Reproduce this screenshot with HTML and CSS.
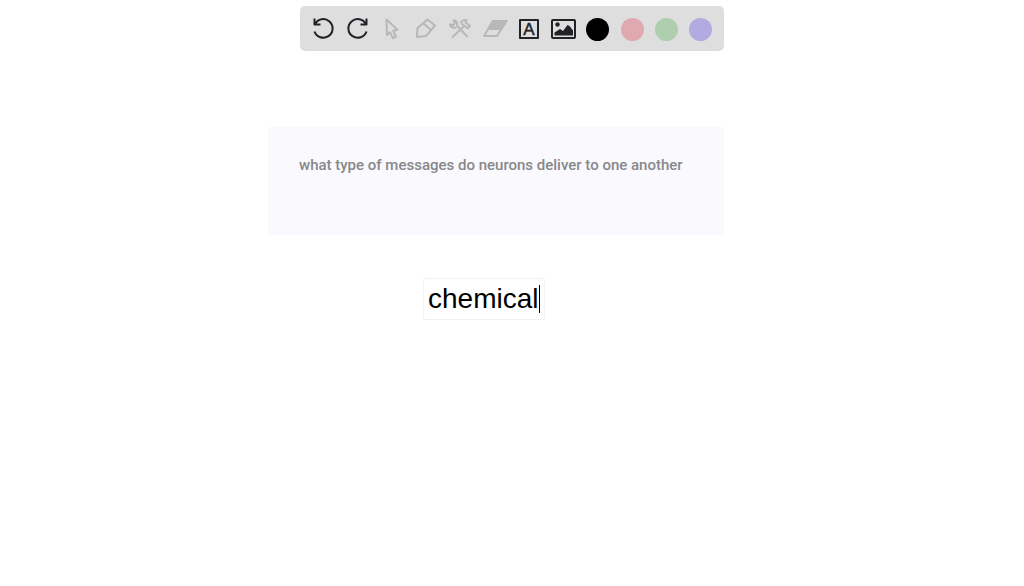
FILE: index.html
```html
<!DOCTYPE html>
<html lang="en">
<head>
  <meta charset="UTF-8" />
  <meta name="viewport" content="width=device-width, initial-scale=1.0"/>
  <title>Whiteboard</title>
  <link rel="stylesheet" href="styles.css">
</head>
<body>
  <main class="board">
    <div class="toolbar" role="toolbar" aria-label="Drawing tools">
      <button type="button" class="tool" aria-label="Undo">
        <svg viewBox="0 0 24 24"><path d="M3.5 1.5v6h6M4 7.2A9.3 9.3 0 1 1 3.5 14.5"/></svg>
      </button>
      <button type="button" class="tool" aria-label="Redo">
        <svg viewBox="0 0 24 24"><path d="M21.5 1.5v6h-6M21 7.2A9.3 9.3 0 1 0 21.5 14.5"/></svg>
      </button>
      <button type="button" class="tool faded" aria-label="Select">
        <svg viewBox="0 0 24 24"><path d="M6.5 2.5L7 18l3-2.8 3 6 3-1.600-2.800-5.800L17.500 12.800z"/></svg>
      </button>
      <button type="button" class="tool faded" aria-label="Pen">
        <svg viewBox="0 0 24 24"><path d="M13.500 2.500L21 8.500 12 19 3 20l.5-9zM9.500 6.500l7.500 6.500"/></svg>
      </button>
      <button type="button" class="tool faded" aria-label="Tools">
        <svg viewBox="0 0 24 24">
          <path d="M5 3c3 0 5 2.500 4 5.500L19.500 20M2 7c0 3 3.500 5 6.500 3M5 3l2 3-2 2.500L2 7"/>
          <path d="M4 20.500L15.500 9.500M12.500 6c1.500-2.500 4-3.500 6-2.500l-1 2 4.500 3.500-2.500 2.500L13.500 6.500"/>
        </svg>
      </button>
      <button type="button" class="tool faded" aria-label="Eraser">
        <svg viewBox="0 0 24 24"><path d="M10 4h13.500L14 19H1z"/><path class="solid" d="M10 4h13.500l-5 8H5z"/></svg>
      </button>
      <button type="button" class="tool" aria-label="Text">
        <svg viewBox="0 0 24 24"><rect x="3" y="3" width="18" height="18"/><text x="12" y="18">A</text></svg>
      </button>
      <button type="button" class="tool" aria-label="Image">
        <svg viewBox="0 0 24 24">
          <rect x="1" y="3" width="23" height="18" rx="1"/>
          <circle class="fill" cx="6.5" cy="7.5" r="2.2"/>
          <path class="fill" d="M3.500 18.500v-3L9 12l3 2 4.500-6 2 1 3.500 4.500v5z"/>
        </svg>
      </button>
      <input type="radio" name="color" class="swatch black" aria-label="Black" checked>
      <input type="radio" name="color" class="swatch red" aria-label="Red">
      <input type="radio" name="color" class="swatch green" aria-label="Green">
      <input type="radio" name="color" class="swatch purple" aria-label="Purple">
    </div>

    <section class="question">
      <p>what type of messages do neurons deliver to one another</p>
    </section>

    <div class="answer">
      <input type="text" class="answer-input" aria-label="Answer" value="chemical">
      <span class="caret"></span>
    </div>
  </main>
</body>
</html>
```

FILE: styles.css
```css
* {
  box-sizing: border-box;
}

body {
  margin: 0;
  background: #fff;
  font-family: Roboto, Arial, sans-serif;
}

.board {
  display: flex;
  flex-direction: column;
  max-width: 488px;
  margin: 0 auto;
  padding: 6px 32px 24px 0;
}

.toolbar {
  display: grid;
  grid-template-columns: repeat(12, 1fr);
  align-items: center;
  justify-items: center;
  margin-left: 32px;
  padding: 11px 6px 10px;
  background: #dedede;
  border-radius: 5px;
}

.tool {
  display: flex;
  padding: 0;
  border: none;
  background: none;
  color: #202226;
  cursor: pointer;
}

.tool svg {
  width: 24px;
  height: 24px;
  overflow: visible;
  fill: none;
  stroke: currentColor;
  stroke-width: 2;
  stroke-linejoin: round;
}

.tool.faded {
  color: #b8b8b8;
}

.tool .solid {
  fill: currentColor;
}

.tool .fill {
  fill: currentColor;
  stroke: none;
}

.tool text {
  fill: currentColor;
  stroke-width: 0.5;
  font-family: "Liberation Sans", Arial, sans-serif;
  font-size: 17px;
  text-anchor: middle;
}

.swatch {
  appearance: none;
  width: 23px;
  height: 23px;
  margin: 0;
  border-radius: 50%;
  cursor: pointer;
}

.black {
  background: #000;
}

.red {
  background: #e0a9b0;
}

.green {
  background: #afceb0;
}

.purple {
  background: #b1abe2;
}

.question {
  min-height: 108px;
  margin-top: 76px;
  padding: 28px 31px;
  background: #f9f9fe;
  border-radius: 2px;
}

.question p {
  margin: 0;
  color: #88888b;
  font-size: 15px;
  font-weight: 500;
  line-height: 20px;
}

.answer {
  display: flex;
  align-items: center;
  align-self: flex-start;
  margin-top: 43px;
  margin-left: 34%;
  padding: 4px;
  border: 1px solid #f0f2f5;
  border-radius: 2px;
}

.answer-input {
  width: 111px;
  padding: 0;
  border: none;
  outline: none;
  background: none;
  color: #000;
  font-family: "Liberation Sans", Arial, sans-serif;
  font-size: 28px;
  line-height: 32px;
}

.caret {
  width: 1px;
  height: 28px;
  background: #000;
}
```
